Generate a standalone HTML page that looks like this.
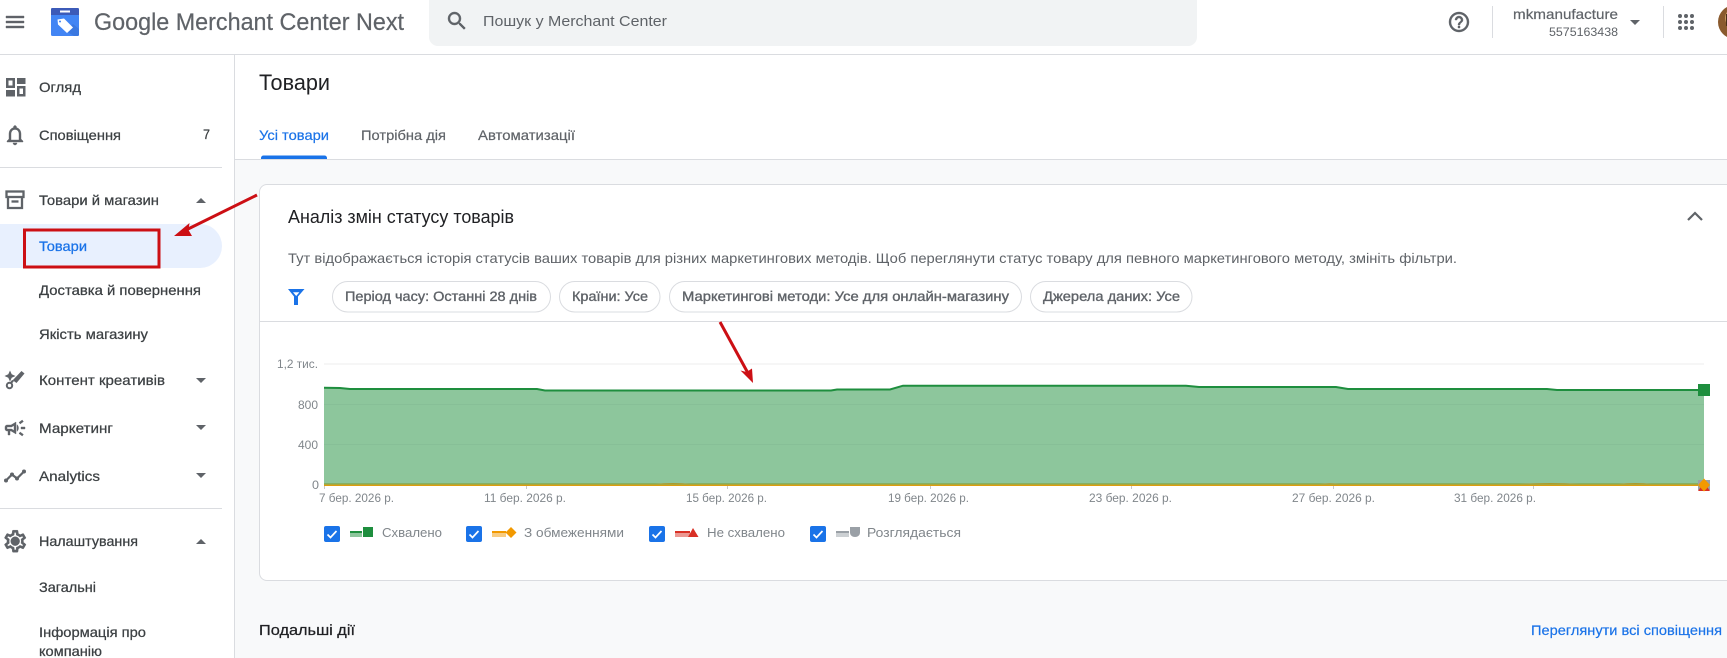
<!DOCTYPE html>
<html lang="uk"><head><meta charset="utf-8"><title>Google Merchant Center Next</title>
<style>
html,body{margin:0;padding:0;width:1727px;height:658px;overflow:hidden;background:#fff}
svg{display:block;filter:blur(.3px)}
text{font-family:"Liberation Sans","Noto Sans CJK JP",sans-serif}
.n{font-size:14px;fill:#3c4043;stroke:#3c4043;stroke-width:.25px}
.c{font-size:14px;fill:#5f6368;stroke:#5f6368;stroke-width:.35px}
.a{font-size:12px;fill:#80868b}
.l{font-size:13px;fill:#80868b}
.i{stroke:#5f6368;stroke-width:.4px}
</style></head><body>
<svg width="1727" height="658" viewBox="0 0 1727 658" xmlns="http://www.w3.org/2000/svg">
<rect width="1727" height="658" fill="#fff"/>
<!-- main background -->
<rect x="235" y="159" width="1492" height="499" fill="#f8f9fa"/>
<rect x="0" y="54" width="1727" height="1" fill="#dadce0"/>
<rect x="234" y="54" width="1" height="604" fill="#dadce0"/>
<rect x="235" y="159" width="1492" height="1" fill="#dadce0"/>

<!-- header -->
<path class="i" transform="translate(3,10)" fill="#5f6368" d="M3 18h18v-2H3v2zm0-5h18v-2H3v2zm0-7v2h18V6H3z"/>
<rect x="51" y="8" width="28" height="28" rx="1.5" fill="#4285f4"/>
<path d="M51 15V9.500A1.500 1.500 0 0 1 52.500 8h25A1.500 1.500 0 0 1 79 9.500V15z" fill="#3c5ab8"/>
<rect x="60" y="10.500" width="10" height="2" fill="#fff"/>
<path d="M79 29v5.500a1.500 1.500 0 0 1-1.500 1.500H74L66 31l7-7z" fill="#3b78e0"/>
<path fill-rule="evenodd" d="M57.500 19.500L64 18.500 73 27.500 67 33 58 24.500zM60 20.500a1 1 0 1 0 .01 0z" fill="#fff"/>
<text x="94" y="30" font-size="24" fill="#5f6368" stroke="#5f6368" stroke-width=".2" textLength="310" lengthAdjust="spacingAndGlyphs">Google Merchant Center Next</text>
<path d="M429 0H1197V37a9 9 0 0 1-9 9H438a9 9 0 0 1-9-9z" fill="#f1f3f4"/>
<path class="i" transform="translate(445,9)" fill="#5f6368" d="M15.500 14h-.79l-.28-.27C15.410 12.590 16 11.110 16 9.500 16 5.910 13.090 3 9.500 3S3 5.910 3 9.500 5.910 16 9.500 16c1.610 0 3.090-.59 4.230-1.570l.27.28v.79l5 4.990L20.490 19l-4.990-5zm-6 0C7.010 14 5 11.990 5 9.500S7.010 5 9.500 5 14 7.010 14 9.500 11.990 14 9.500 14z"/>
<text x="483" y="26" font-size="15" fill="#5f6368" textLength="184" lengthAdjust="spacingAndGlyphs">Пошук у Merchant Center</text>
<path class="i" transform="translate(1447,10)" fill="#5f6368" d="M11 18h2v-2h-2v2zm1-16C6.480 2 2 6.480 2 12s4.480 10 10 10 10-4.480 10-10S17.520 2 12 2zm0 18c-4.410 0-8-3.590-8-8s3.590-8 8-8 8 3.590 8 8-3.590 8-8 8zm0-14c-2.210 0-4 1.790-4 4h2c0-1.100.9-2 2-2s2 .9 2 2c0 2-3 1.750-3 5h2c0-2.250 3-2.500 3-5 0-2.210-1.790-4-4-4z"/>
<rect x="1492" y="6" width="1" height="32" fill="#dadce0"/>
<text x="1513" y="19" font-size="14" fill="#5f6368" stroke="#5f6368" stroke-width=".2" textLength="105" lengthAdjust="spacingAndGlyphs">mkmanufacture</text>
<text x="1549" y="36" font-size="12" fill="#5f6368" textLength="69" lengthAdjust="spacingAndGlyphs">5575163438</text>
<path d="M1630 20h10l-5 5z" fill="#5f6368"/>
<rect x="1663" y="6" width="1" height="32" fill="#dadce0"/>
<g fill="#5f6368"><circle cx="1680" cy="16" r="2"/><circle cx="1686" cy="16" r="2"/><circle cx="1692" cy="16" r="2"/><circle cx="1680" cy="22" r="2"/><circle cx="1686" cy="22" r="2"/><circle cx="1692" cy="22" r="2"/><circle cx="1680" cy="28" r="2"/><circle cx="1686" cy="28" r="2"/><circle cx="1692" cy="28" r="2"/></g>
<circle cx="1735" cy="22" r="17" fill="#8a5a2e"/>
<circle cx="1735" cy="18" r="10" fill="#c79a62"/>
<rect x="1726" y="14" width="1.500" height="12" fill="#4a2f18"/>

<!-- sidebar -->
<g fill="#5f6368">
<path fill-rule="evenodd" d="M6 78h9v10H6zM8.500 80.500v5h4v-5z"/>
<rect x="17" y="78" width="8.500" height="6"/>
<rect x="6" y="90" width="9" height="6.500"/>
<path fill-rule="evenodd" d="M17 86h8.500v10.500H17zM19.500 88.500v5.500h3.500v-5.500z"/>
</g>
<text class="n" x="39" y="92" textLength="42" lengthAdjust="spacingAndGlyphs">Огляд</text>
<path class="i" transform="translate(3,123)" fill="#5f6368" d="M12 22c1.100 0 2-.9 2-2h-4c0 1.100.9 2 2 2zm6-6v-5c0-3.070-1.630-5.640-4.500-6.320V4c0-.83-.67-1.500-1.500-1.500s-1.500.67-1.500 1.500v.68C7.640 5.360 6 7.920 6 11v5l-2 2v1h16v-1l-2-2zm-2 1H8v-6c0-2.480 1.510-4.500 4-4.500s4 2.020 4 4.500v6z"/>
<text class="n" x="39" y="140" textLength="82" lengthAdjust="spacingAndGlyphs">Сповіщення</text>
<text class="n" x="203" y="139" textLength="7" lengthAdjust="spacingAndGlyphs">7</text>
<rect x="0" y="167" width="222" height="1" fill="#dadce0"/>
<g fill="none" stroke="#5f6368" stroke-width="2.300"><rect x="6.500" y="191.500" width="17" height="5.500"/><path d="M8 197v11h14v-11"/><path d="M11.500 201.500h7"/></g>
<text class="n" x="39" y="205" textLength="120" lengthAdjust="spacingAndGlyphs">Товари й магазин</text>
<path d="M196 203l5-5 5 5z" fill="#5f6368"/>
<path d="M0 224H200a22 22 0 0 1 0 44H0z" fill="#e8f0fe"/>
<text x="39" y="251" font-size="14" fill="#1a73e8" stroke="#1a73e8" stroke-width=".25" textLength="48" lengthAdjust="spacingAndGlyphs">Товари</text>
<text class="n" x="39" y="295" textLength="162" lengthAdjust="spacingAndGlyphs">Доставка й повернення</text>
<text class="n" x="39" y="339" textLength="109" lengthAdjust="spacingAndGlyphs">Якість магазину</text>
<!-- creative -->
<g fill="#5f6368"><path d="M10 370.500l1.700 3.800L15.500 376l-3.800 1.700L10 381.500l-1.700-3.800L4.500 376l3.800-1.700z"/>
<path d="M21.500 371l3 2.500-8 9.500-3.800-2.800z"/></g>
<circle cx="9.500" cy="385.500" r="2.700" fill="none" stroke="#5f6368" stroke-width="2"/>
<path d="M11 383l2-2.500" stroke="#5f6368" stroke-width="2.200"/>
<text class="n" x="39" y="385" textLength="126" lengthAdjust="spacingAndGlyphs">Контент креативів</text>
<path d="M196 378h10l-5 5z" fill="#5f6368"/>
<path class="i" transform="translate(3,416)" fill="#5f6368" d="M18 11v2h4v-2h-4zm-2 6.610c.96.71 2.210 1.650 3.200 2.390.4-.53.8-1.070 1.200-1.600-.99-.74-2.240-1.680-3.200-2.400-.4.54-.8 1.080-1.200 1.610zM20.400 5.600c-.4-.53-.8-1.070-1.200-1.600-.99.74-2.240 1.680-3.200 2.400.4.53.8 1.070 1.200 1.600.96-.72 2.210-1.650 3.200-2.400zM4 9c-1.100 0-2 .9-2 2v2c0 1.100.9 2 2 2h1v4h2v-4h1l5 3V6L8 9H4zm5.030 1.710L11 9.530v4.940l-1.970-1.180-.48-.29H4v-2h4.550l.48-.29zM15.500 12c0-1.330-.58-2.530-1.500-3.350v6.690c.92-.81 1.500-2.010 1.500-3.340z"/>
<text class="n" x="39" y="433" textLength="74" lengthAdjust="spacingAndGlyphs">Маркетинг</text>
<path d="M196 425h10l-5 5z" fill="#5f6368"/>
<g stroke="#5f6368" stroke-width="2.200" fill="none"><path d="M6 480.500l6-6 5 4 7-7"/></g>
<g fill="#5f6368"><circle cx="6" cy="480.500" r="2"/><circle cx="12" cy="474.500" r="2"/><circle cx="17" cy="478.500" r="2"/><circle cx="24" cy="471.500" r="2"/></g>
<text class="n" x="39" y="481" textLength="61" lengthAdjust="spacingAndGlyphs">Analytics</text>
<path d="M196 473h10l-5 5z" fill="#5f6368"/>
<rect x="0" y="508" width="222" height="1" fill="#dadce0"/>
<path class="i" transform="translate(2,528) scale(1.100)" fill="#5f6368" d="M19.430 12.980c.04-.32.07-.64.07-.98 0-.34-.03-.66-.07-.98l2.110-1.650c.19-.15.24-.42.12-.64l-2-3.460c-.09-.16-.26-.25-.44-.25-.06 0-.12.01-.17.03l-2.490 1c-.52-.4-1.080-.73-1.690-.98l-.38-2.650C14.460 2.180 14.250 2 14 2h-4c-.25 0-.46.18-.49.42l-.38 2.650c-.61.25-1.170.59-1.690.98l-2.490-1c-.06-.02-.12-.03-.18-.03-.17 0-.34.09-.43.25l-2 3.460c-.13.22-.07.49.12.64l2.110 1.650c-.04.32-.07.65-.07.98 0 .33.03.66.07.98l-2.110 1.650c-.19.15-.24.42-.12.64l2 3.460c.09.16.26.25.44.25.06 0 .12-.01.17-.03l2.490-1c.52.4 1.080.73 1.690.98l.38 2.650c.03.24.24.42.49.42h4c.25 0 .46-.18.49-.42l.38-2.650c.61-.25 1.170-.59 1.690-.98l2.490 1c.06.02.12.03.18.03.17 0 .34-.09.43-.25l2-3.460c.12-.22.07-.49-.12-.64l-2.110-1.650zm-1.980-1.710c.04.31.05.52.05.73 0 .21-.02.43-.05.73l-.14 1.130.89.7 1.080.84-.7 1.210-1.270-.51-1.040-.42-.9.68c-.43.32-.84.56-1.250.73l-1.060.43-.16 1.130-.2 1.350h-1.400l-.19-1.350-.16-1.130-1.060-.43c-.43-.18-.83-.41-1.230-.71l-.91-.7-1.060.43-1.270.51-.7-1.210 1.080-.84.89-.7-.14-1.130c-.03-.31-.05-.54-.05-.74s.02-.43.05-.73l.14-1.130-.89-.7-1.080-.84.7-1.210 1.270.51 1.040.42.9-.68c.43-.32.84-.56 1.250-.73l1.060-.43.16-1.130.2-1.350h1.390l.19 1.350.16 1.130 1.060.43c.43.18.83.41 1.230.71l.91.7 1.060-.43 1.270-.51.7 1.210-1.070.85-.89.7.14 1.130zM12 8c-2.210 0-4 1.790-4 4s1.790 4 4 4 4-1.790 4-4-1.790-4-4-4z"/>
<text class="n" x="39" y="546" textLength="99" lengthAdjust="spacingAndGlyphs">Налаштування</text>
<path d="M196 544l5-5 5 5z" fill="#5f6368"/>
<text class="n" x="39" y="592" textLength="57" lengthAdjust="spacingAndGlyphs">Загальні</text>
<text class="n" x="39" y="637" textLength="107" lengthAdjust="spacingAndGlyphs">Інформація про</text>
<text class="n" x="39" y="656" textLength="63" lengthAdjust="spacingAndGlyphs">компанію</text>

<!-- title and tabs -->
<text x="259" y="90" font-size="22" fill="#202124" textLength="71" lengthAdjust="spacingAndGlyphs">Товари</text>
<text x="259" y="140" font-size="14" fill="#1a73e8" stroke="#1a73e8" stroke-width=".2" textLength="70" lengthAdjust="spacingAndGlyphs">Усі товари</text>
<text x="361" y="140" font-size="14" fill="#5f6368" stroke="#5f6368" stroke-width=".2" textLength="85" lengthAdjust="spacingAndGlyphs">Потрібна дія</text>
<text x="478" y="140" font-size="14" fill="#5f6368" stroke="#5f6368" stroke-width=".2" textLength="97" lengthAdjust="spacingAndGlyphs">Автоматизації</text>
<path d="M261 159v-1a2.500 2.500 0 0 1 2.500-2.500h61a2.500 2.500 0 0 1 2.500 2.500v1z" fill="#1a73e8"/>

<!-- card -->
<path d="M1740 184.500H267a7.500 7.500 0 0 0-7.500 7.500V573a7.500 7.500 0 0 0 7.500 7.500H1740z" fill="#fff" stroke="#dadce0"/>
<text x="288" y="223" font-size="18" fill="#202124" textLength="226" lengthAdjust="spacingAndGlyphs">Аналіз змін статусу товарів</text>
<path d="M1688 220l7-7 7 7" fill="none" stroke="#5f6368" stroke-width="2.200"/>
<text x="288" y="263" font-size="14" fill="#5f6368" textLength="1169" lengthAdjust="spacingAndGlyphs">Тут відображається історія статусів ваших товарів для різних маркетингових методів. Щоб переглянути статус товару для певного маркетингового методу, змініть фільтри.</text>
<path fill-rule="evenodd" d="M288 289h16.500l-6.500 7.500V305h-4v-8.500zM293 292.200h6.400l-3.200 3.800z" fill="#1a73e8"/>
<g fill="#fff" stroke="#dadce0">
<rect x="332.500" y="281.500" width="218" height="30.500" rx="15.250"/>
<rect x="559.500" y="281.500" width="100.500" height="30.500" rx="15.250"/>
<rect x="669.500" y="281.500" width="352" height="30.500" rx="15.250"/>
<rect x="1030.500" y="281.500" width="161.500" height="30.500" rx="15.250"/>
</g>
<text class="c" x="345" y="301" textLength="192" lengthAdjust="spacingAndGlyphs">Період часу: Останні 28 днів</text>
<text class="c" x="572" y="301" textLength="76" lengthAdjust="spacingAndGlyphs">Країни: Усе</text>
<text class="c" x="682" y="301" textLength="327" lengthAdjust="spacingAndGlyphs">Маркетингові методи: Усе для онлайн-магазину</text>
<text class="c" x="1043" y="301" textLength="137" lengthAdjust="spacingAndGlyphs">Джерела даних: Усе</text>
<rect x="260" y="321" width="1467" height="1" fill="#dadce0"/>

<!-- chart -->
<rect x="324" y="363" width="1380" height="2" fill="#f6f6f6"/>
<path d="M324 387.700L340 388 350 389H537L545 390.500H831L837 389.500H890L903 385.700H1186L1199 387H1336L1348 389H1547L1557 390H1704V484H324z" fill="#8dc69c"/>
<rect x="324" y="404" width="1380" height="1" fill="#87bf97"/>
<rect x="324" y="444" width="1380" height="1" fill="#87bf97"/>
<path d="M324 387.700L340 388 350 389H537L545 390.500H831L837 389.500H890L903 385.700H1186L1199 387H1336L1348 389H1547L1557 390H1704" fill="none" stroke="#1e8e3e" stroke-width="2"/>
<rect x="324" y="483.500" width="1380" height="1.200" fill="#7f9a2a"/>
<rect x="324" y="484.700" width="1380" height="1.300" fill="#dd9d0f"/>
<path d="M655 484q18-2 36 0zM1320 484q10-1.500 20 0zM1520 484q30-2 60 0zM1618 484q18-2 34 0z" fill="#a79a30"/>
<g fill="#c8c8c8"><rect x="324" y="486" width="1" height="3"/><rect x="526" y="486" width="1" height="3"/><rect x="727" y="486" width="1" height="3"/><rect x="930" y="486" width="1" height="3"/><rect x="1131" y="486" width="1" height="3"/><rect x="1333" y="486" width="1" height="3"/><rect x="1533" y="486" width="1" height="3"/></g>
<rect x="1698" y="384" width="12" height="12" fill="#1e8e3e"/>
<rect x="1698" y="480" width="12" height="10" fill="#9aa0a6"/>
<path d="M1698 491l6-9 6 9z" fill="#d93025"/>
<path d="M1704 478.500l6 6.500-6 6.500-6-6.500z" fill="#f29900"/>
<text class="a" x="277" y="368" textLength="41" lengthAdjust="spacingAndGlyphs">1,2 тис.</text>
<text class="a" x="298" y="409" textLength="20" lengthAdjust="spacingAndGlyphs">800</text>
<text class="a" x="298" y="449" textLength="20" lengthAdjust="spacingAndGlyphs">400</text>
<text class="a" x="312" y="489" textLength="7" lengthAdjust="spacingAndGlyphs">0</text>
<text class="a" x="319" y="502" textLength="75" lengthAdjust="spacingAndGlyphs">7 бер. 2026 р.</text>
<text class="a" x="484" y="502" textLength="82" lengthAdjust="spacingAndGlyphs">11 бер. 2026 р.</text>
<text class="a" x="686" y="502" textLength="81" lengthAdjust="spacingAndGlyphs">15 бер. 2026 р.</text>
<text class="a" x="888" y="502" textLength="81" lengthAdjust="spacingAndGlyphs">19 бер. 2026 р.</text>
<text class="a" x="1089" y="502" textLength="83" lengthAdjust="spacingAndGlyphs">23 бер. 2026 р.</text>
<text class="a" x="1292" y="502" textLength="83" lengthAdjust="spacingAndGlyphs">27 бер. 2026 р.</text>
<text class="a" x="1454" y="502" textLength="82" lengthAdjust="spacingAndGlyphs">31 бер. 2026 р.</text>

<!-- legend -->
<g fill="#1a73e8"><rect x="324" y="526" width="16" height="16" rx="2"/><rect x="466" y="526" width="16" height="16" rx="2"/><rect x="649" y="526" width="16" height="16" rx="2"/><rect x="810" y="526" width="16" height="16" rx="2"/></g>
<g fill="none" stroke="#fff" stroke-width="1.700"><path d="M327.500 534.500l3 3 6-6.500"/><path d="M469.500 534.500l3 3 6-6.500"/><path d="M652.500 534.500l3 3 6-6.500"/><path d="M813.500 534.500l3 3 6-6.500"/></g>
<rect x="350" y="531" width="12" height="2" fill="#1e8e3e"/><rect x="350" y="533" width="12" height="4" fill="#8dc69c"/><rect x="363" y="527" width="10" height="10" fill="#1e8e3e"/>
<rect x="492" y="531" width="14" height="2" fill="#f29900"/><rect x="492" y="533" width="14" height="4" fill="#f9cc80"/><path d="M511 527l5.500 5.500-5.500 5.500-5.500-5.500z" fill="#f29900"/>
<rect x="675" y="531" width="15" height="2" fill="#d93025"/><rect x="675" y="533" width="15" height="4" fill="#ec9892"/><path d="M688 537l5-9 5.500 9z" fill="#d93025"/>
<rect x="836" y="531" width="13" height="2" fill="#9aa0a6"/><rect x="836" y="533" width="13" height="4" fill="#ccd0d3"/><path d="M850 527h10v5.500c0 3-2.500 4.500-5 4.500s-5-1.500-5-4.500z" fill="#9aa0a6"/>
<text class="l" x="382" y="537" textLength="60" lengthAdjust="spacingAndGlyphs">Схвалено</text>
<text class="l" x="524" y="537" textLength="100" lengthAdjust="spacingAndGlyphs">З обмеженнями</text>
<text class="l" x="707" y="537" textLength="78" lengthAdjust="spacingAndGlyphs">Не схвалено</text>
<text class="l" x="867" y="537" textLength="94" lengthAdjust="spacingAndGlyphs">Розглядається</text>

<!-- bottom -->
<text x="259" y="635" font-size="15" fill="#202124" stroke="#202124" stroke-width=".25" textLength="96" lengthAdjust="spacingAndGlyphs">Подальші дії</text>
<text x="1531" y="635" font-size="14" fill="#1a73e8" stroke="#1a73e8" stroke-width=".2" textLength="191" lengthAdjust="spacingAndGlyphs">Переглянути всі сповіщення</text>

<!-- annotations -->
<rect x="24.500" y="230" width="134.500" height="37" fill="none" stroke="#cc0f14" stroke-width="3"/>
<path d="M257 195L184 231" stroke="#cc0f14" stroke-width="3" fill="none"/>
<path d="M174 236l15.500-13-1 7 3.500 6z" fill="#cc0f14"/>
<path d="M720 322L749 375" stroke="#cc0f14" stroke-width="3" fill="none"/>
<path d="M753 383l-12.500-12.500 6 1.500 5.500-3.500z" fill="#cc0f14"/>
</svg>
</body></html>
